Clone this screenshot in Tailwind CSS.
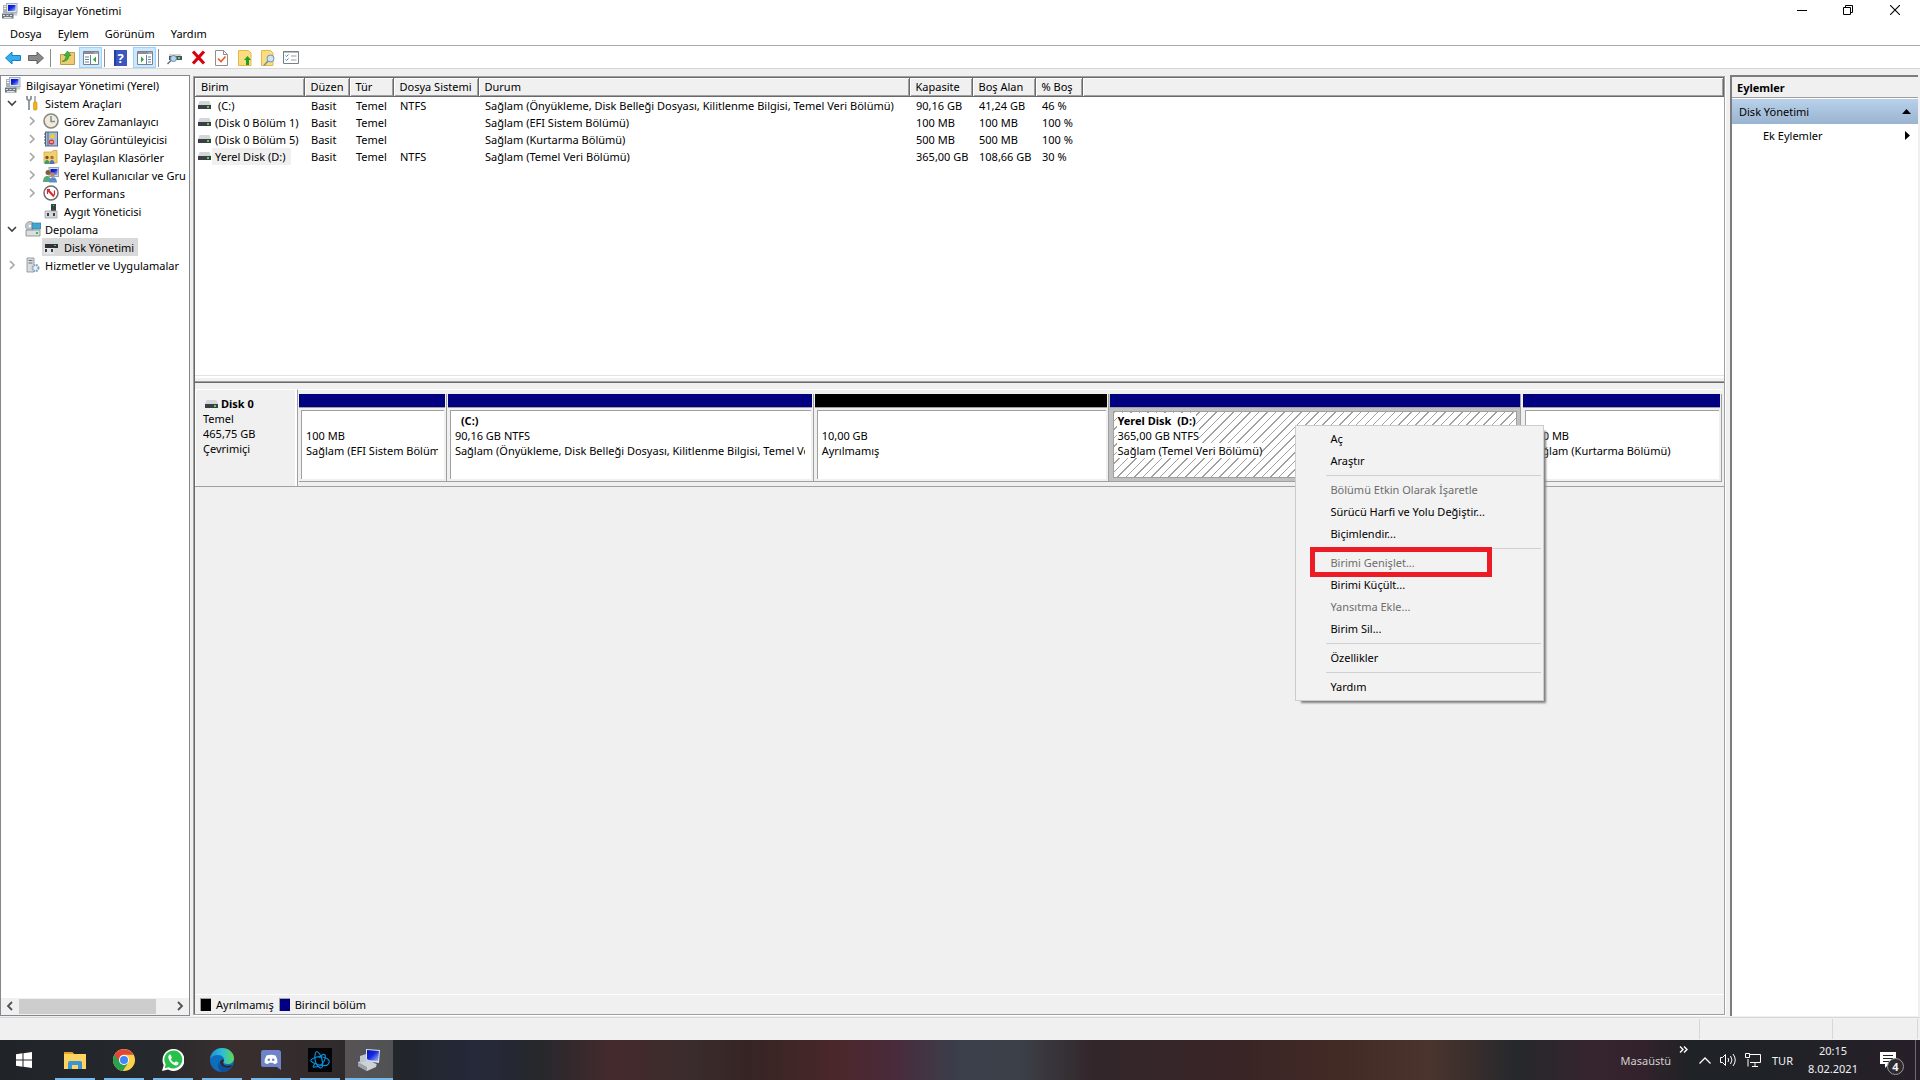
<!DOCTYPE html>
<html lang="tr">
<head>
<meta charset="utf-8">
<title>Bilgisayar Yönetimi</title>
<script src="https://cdn.jsdelivr.net/npm/@tailwindcss/browser@4"></script>
</head>
<body class="flex min-h-screen flex-col bg-[#f0f0f0] font-['Noto_Sans',sans-serif] text-[11px] leading-[17px] text-black">

<!-- Shared icons -->
<svg width="0" height="0" class="absolute" aria-hidden="true">
  <defs>
    <linearGradient id="gb" x1="0" y1="0" x2="1" y2="1"><stop offset="0" stop-color="#0412b8"/><stop offset=".45" stop-color="#1228e0"/><stop offset="1" stop-color="#a9c0ff"/></linearGradient>
    <symbol id="mmc" viewBox="0 0 16 16">
      <path d="M1 2h4l1-1v9H1z" fill="#aab1b8"/><path d="M2 3.500h2M2 5.500h2" stroke="#f4f6f8"/>
      <rect x="4.500" y=".5" width="10.500" height="9" fill="#e4e7ea" stroke="#a5adb5"/>
      <rect x="6" y="2" width="7.500" height="6" fill="url(#gb)"/>
      <path d="M9 10h6l.5 2.500H9z" fill="#c5cbd1"/>
      <rect x="0" y="10.500" width="11.500" height="5" fill="#6c7780"/><path d="M1 12.500h2M4.500 12.500h2M8 12.500h2M2 14.500h7.500" stroke="#dfe4e8"/>
    </symbol>
    <symbol id="drive" viewBox="0 0 13 8">
      <path d="M1.500 0h10L13 4H0z" fill="#d3d7dc"/><rect y="4" width="13" height="4" fill="#3b3f43"/><rect x="9" y="5" width="2" height="2" fill="#3fe04a"/>
    </symbol>
    <symbol id="down" viewBox="0 0 10 10"><path d="M1 3l4 4 4-4" fill="none" stroke="#404040" stroke-width="1.600"/></symbol>
    <symbol id="right" viewBox="0 0 10 10"><path d="M3 1l4 4-4 4" fill="none" stroke="#a6a6a6" stroke-width="1.600"/></symbol>
    <symbol id="pane" viewBox="0 0 16 14"><path d="M.5.5h15v13H.5z" fill="#fff" stroke="#7d8084"/><path d="M1 2h14" stroke="#8b8e92" stroke-width="2"/><path d="M11.500 2h1M13.500 2h1" stroke="#fff"/></symbol>
  </defs>
</svg>

<header class="bg-white">
  <div class="flex h-[24px] items-start">
    <div class="flex flex-1 items-center gap-[5px] pt-[2px] pl-[2px]">
      <svg class="size-4"><use href="#mmc"/></svg><h1>Bilgisayar Yönetimi</h1>
    </div>
    <button aria-label="Simge durumuna küçült" class="flex h-[20px] w-[46px] items-center justify-center"><svg width="10" height="10"><path d="M0 5.500h10" stroke="#000"/></svg></button>
    <button aria-label="Önceki boyut" class="flex h-[20px] w-[45px] items-center justify-center"><svg width="10" height="10" fill="none" stroke="#000"><path d="M.5 2.500h7v7h-7zM2.500 2.500v-2h7v7h-2"/></svg></button>
    <button aria-label="Kapat" class="flex h-[20px] w-[50px] items-center justify-center"><svg width="10" height="10"><path d="M0 0l10 10M10 0L0 10" stroke="#000" stroke-width="1.100"/></svg></button>
  </div>
  <nav class="flex h-[22px] items-center gap-4 border-b border-[#a9abb4] pb-[2px] pl-[10px]">
    <button>Dosya</button><button>Eylem</button><button>Görünüm</button><button>Yardım</button>
  </nav>
  <div class="flex h-[23px] items-center border-b border-[#d7d7d7] pl-[5px] pt-px">
    <button aria-label="Geri" class="mr-[7px]"><svg class="block" width="16" height="14"><path d="M.5 7L7 1v3.500h8.500v5H7V13z" fill="#35aef0" stroke="#1b7fc0"/></svg></button>
    <button aria-label="İleri" class="mr-[6px]"><svg class="block" width="16" height="14"><path d="M15.500 7L9 1v3.500H.5v5H9V13z" fill="#8a8a8a" stroke="#636363"/></svg></button>
    <span class="h-[18px] w-px bg-[#8c8c8c]"></span>
    <button aria-label="Yukarı" class="ml-[9px]"><svg class="block" width="15" height="15"><path d="M.5 4.500h7l1-2h6v12H.5z" fill="#eccb72" stroke="#c19a3c"/><path d="M2 11.500c3-1 4-3.500 4-6H4l3.500-4.500L11 5.500H9c0 4-3 6-7 6z" fill="#45b33c" stroke="#2a8a2a" stroke-width=".6"/></svg></button>
    <button aria-label="Konsol ağacını göster" class="ml-1 flex h-[21px] w-[23px] items-center justify-center border border-[#99d1ff] bg-[#cce8ff]"><svg width="16" height="14"><use href="#pane"/><path d="M7.500 4v9M2 6h4M2 8.500h4M2 11h4" stroke="#66809a"/><path d="M13 5.500v6L10 8.500z" fill="#33a533"/></svg></button>
    <span class="ml-[2px] h-[18px] w-px bg-[#8c8c8c]"></span>
    <button aria-label="Yardım konuları" class="ml-[9px] h-4 w-[13px] bg-[#3c57bf] text-center text-[13px] leading-4 font-bold text-white shadow-[inset_2px_0_0_#24409a]">?</button>
    <button aria-label="Eylem bölmesini göster" class="ml-[6px] flex h-[21px] w-[23px] items-center justify-center border border-[#99d1ff] bg-[#cce8ff]"><svg width="16" height="14"><use href="#pane"/><path d="M9.500 4v9M11 6h3M11 8.500h3M11 11h3" stroke="#66809a"/><path d="M4 5.500v6l3-3z" fill="#33a533"/></svg></button>
    <span class="ml-[2px] h-[18px] w-px bg-[#8c8c8c]"></span>
    <button aria-label="Yenile" class="ml-2"><svg class="block" width="16" height="14"><path d="M2 3h12v2H2z" fill="#cfd4d8"/><path d="M2 5h13v4H2z" fill="#4c5257"/><path d="M11 6h2v2h-2z" fill="#3fe04a"/><circle cx="6.500" cy="7.500" r="3" fill="#b9d3e8" stroke="#6b8ba6"/><path d="M4 9.500L.5 13" stroke="#5b7183" stroke-width="1.500"/></svg></button>
    <button aria-label="Sil" class="ml-2"><svg class="block" width="15" height="15"><path d="M2 1.500l11 12M13 1.500l-11 12" stroke="#d8000c" stroke-width="3.200"/></svg></button>
    <button aria-label="Özellikler" class="ml-[9px]"><svg class="block" width="13" height="16"><path d="M.5.500h8l4 4v11H.5z" fill="#fff" stroke="#8f8f8f"/><path d="M8.500.500v4h4" fill="none" stroke="#8f8f8f"/><path d="M3 8.500l3 3 4.500-5" fill="none" stroke="#ec5b2c" stroke-width="1.700"/></svg></button>
    <button aria-label="Aç" class="ml-[10px]"><svg class="block" width="14" height="16"><path d="M.5.500h10l2.500 2.500v12.500H.5z" fill="#fbdc80" stroke="#e5b84c"/><path d="M9.500 6L13 10h-2v5H8v-5H6z" fill="#1f9e2c"/></svg></button>
    <button aria-label="Ara" class="ml-[9px]"><svg class="block" width="15" height="16"><path d="M.5.500h9l2.500 2.500v12.500H.5z" fill="#fbdc80" stroke="#e5b84c"/><circle cx="9.500" cy="8.500" r="3.500" fill="#cfe5f5" stroke="#6e92b0"/><path d="M7 11l-4 4.500" stroke="#6e92b0" stroke-width="1.500"/></svg></button>
    <button aria-label="Liste" class="ml-[7px]"><svg class="block" width="16" height="13"><path d="M.5.500h15v12H.5z" fill="#fff" stroke="#7c8084"/><path d="M0 1h16" stroke="#7c8084"/><path d="M2.500 4.500l1 1 2-2M2.500 8.500l1 1 2-2" fill="none" stroke="#2e86d6"/><path d="M8 5h5.500M8 9h5.500" stroke="#9a9da0"/></svg></button>
  </div>
</header>

<div class="flex flex-1 pt-[6px]">
  <!-- Console tree -->
  <aside class="mb-px flex w-[190px] shrink-0 flex-col overflow-hidden border border-[#828790] bg-white">
    <ul class="flex-1 whitespace-nowrap">
      <li class="flex h-[18px] items-center gap-[5px] pl-1"><svg class="size-4 shrink-0"><use href="#mmc"/></svg>Bilgisayar Yönetimi (Yerel)</li>
      <li class="flex h-[18px] items-center pl-[6px]"><svg class="mr-2 size-[10px] shrink-0"><use href="#down"/></svg><svg class="mr-1 size-4 shrink-0" viewBox="0 0 16 16"><path d="M2 1v3l2 2 2-2V1M4 6v9" fill="none" stroke="#8a9096" stroke-width="1.800"/><path d="M10 1v6" stroke="#9aa0a6" stroke-width="1.500"/><rect x="8.500" y="7" width="3.500" height="8" rx="1" fill="#f2b318" stroke="#c98a06" stroke-width=".6"/></svg>Sistem Araçları</li>
      <li class="flex h-[18px] items-center pl-[26px]"><svg class="mr-[6px] size-[10px] shrink-0"><use href="#right"/></svg><svg class="mr-[5px] size-4 shrink-0" viewBox="0 0 16 16"><circle cx="8" cy="8" r="7" fill="#f4ead2" stroke="#84888c" stroke-width="1.600"/><path d="M8 3v5.500h4" fill="none" stroke="#6f8fb4" stroke-width="1.500"/></svg>Görev Zamanlayıcı</li>
      <li class="flex h-[18px] items-center pl-[26px]"><svg class="mr-[6px] size-[10px] shrink-0"><use href="#right"/></svg><svg class="mr-[5px] size-4 shrink-0" viewBox="0 0 16 16"><rect x="2.500" y="1" width="12" height="14" fill="#a9bdd8" stroke="#4e6585"/><path d="M5 1v14" stroke="#4e6585"/><path d="M9.500 2l3 5h-6z" fill="#f7cf1b"/><circle cx="8.500" cy="11" r="2.600" fill="#d8343a"/><path d="M7 11h3" stroke="#fff"/><path d="M1 3h2M1 6h2M1 9h2M1 12h2" stroke="#555"/></svg>Olay Görüntüleyicisi</li>
      <li class="flex h-[18px] items-center pl-[26px]"><svg class="mr-[6px] size-[10px] shrink-0"><use href="#right"/></svg><svg class="mr-[5px] size-4 shrink-0" viewBox="0 0 16 16"><path d="M1 3h8l1-1.500h4V14H1z" fill="#f2cf6e" stroke="#d2a63c" stroke-width=".8"/><circle cx="4" cy="8.500" r="1.700" fill="#7a5130"/><circle cx="9" cy="8.500" r="1.700" fill="#9b7047"/><path d="M1.500 15c0-5.500 5-5.500 5 0z" fill="#3f9a6c"/><path d="M6.500 15c0-5.500 5-5.500 5 0z" fill="#4a79b8"/></svg>Paylaşılan Klasörler</li>
      <li class="flex h-[18px] items-center pl-[26px]"><svg class="mr-[6px] size-[10px] shrink-0"><use href="#right"/></svg><svg class="mr-[5px] size-4 shrink-0" viewBox="0 0 16 16"><rect x="6" y=".5" width="9.500" height="9" fill="#d9dde2" stroke="#9aa3ad"/><rect x="7.500" y="2" width="7" height="6" fill="url(#gb)"/><circle cx="5" cy="5.500" r="2.500" fill="#80603a"/><circle cx="9.500" cy="7.500" r="2.300" fill="#b98a55"/><path d="M0 15c0-8 8-8 8 0z" fill="#5aa77c"/><path d="M6 15.500c0-7 8-7 8 0z" fill="#5b8cc4"/></svg>Yerel Kullanıcılar ve Gru</li>
      <li class="flex h-[18px] items-center pl-[26px]"><svg class="mr-[6px] size-[10px] shrink-0"><use href="#right"/></svg><svg class="mr-[5px] size-4 shrink-0" viewBox="0 0 16 16"><circle cx="8" cy="8" r="7" fill="#fff" stroke="#6e6e6e" stroke-width="1.500"/><path d="M4.500 4.500l6.500 7" stroke="#d8242a" stroke-width="2"/><path d="M4.500 9V4.500H7M11.500 10V5.500" fill="none" stroke="#d8242a" stroke-width="1.200"/></svg>Performans</li>
      <li class="flex h-[18px] items-center pl-[42px]"><svg class="mr-[5px] size-4 shrink-0" viewBox="0 0 16 16"><path d="M8 1h5v8H8z" fill="#3c4044"/><path d="M10 2h1v1h-1z" fill="#3fe04a"/><path d="M2 8h12v7H2z" fill="#d4d7da" stroke="#9ea2a6" stroke-width=".8"/><path d="M4 10h2v3H4zM10 10h2v3h-2z" fill="#3c4044"/></svg>Aygıt Yöneticisi</li>
      <li class="flex h-[18px] items-center pl-[6px]"><svg class="mr-2 size-[10px] shrink-0"><use href="#down"/></svg><svg class="mr-1 size-4 shrink-0" viewBox="0 0 16 16"><circle cx="5" cy="5" r="4.500" fill="#c3c8cc" stroke="#8a9096" stroke-width=".7"/><circle cx="5" cy="5" r="1.300" fill="#fff"/><rect x="7" y="2" width="9" height="6" fill="#43a6cf" stroke="#2a7ea6" stroke-width=".7"/><path d="M1 9h14v6H1z" fill="#dcdfe2" stroke="#7d8388" stroke-width=".8"/><path d="M11 11h2v2h-2z" fill="#2fbf3a"/></svg>Depolama</li>
      <li class="flex h-[18px] items-center pl-[41px]"><button class="flex h-[18px] items-center bg-[#d9d9d9] pr-1 pl-px"><svg class="mr-[5px] size-4 shrink-0" viewBox="0 0 16 16"><path d="M3 2h11l1 3H2z" fill="#d3d7dc"/><path d="M2 5h13v4H2z" fill="#303438"/><path d="M11 6h2v1h-2z" fill="#3fe04a"/><path d="M1 9h10v6H1z" fill="#e4e6e8"/><path d="M2 10h2v3H2zM8 10h2v3H8z" fill="#3c4044"/></svg>Disk Yönetimi</button></li>
      <li class="flex h-[18px] items-center pl-[6px]"><svg class="mr-2 size-[10px] shrink-0"><use href="#right"/></svg><svg class="mr-1 size-4 shrink-0" viewBox="0 0 16 16"><path d="M2 1h7v14H2z" fill="#dadde0" stroke="#858b90" stroke-width=".8"/><path d="M3.500 3.500h4M3.500 6h4" stroke="#6a7075"/><circle cx="10.500" cy="11" r="3" fill="#e8f1f8" stroke="#7da3c2" stroke-width="2" stroke-dasharray="1.600 .8"/></svg>Hizmetler ve Uygulamalar</li>
    </ul>
    <div class="flex h-[17px] items-center bg-[#f0f0f0] pb-px">
      <button aria-label="Sola kaydır" class="flex w-[18px] justify-center"><svg width="10" height="10"><path d="M7 1L3 5l4 4" fill="none" stroke="#505050" stroke-width="1.800"/></svg></button>
      <span class="h-[15px] w-[137px] bg-[#cdcdcd]"></span>
      <button aria-label="Sağa kaydır" class="ml-auto flex w-[18px] justify-center"><svg width="10" height="10"><path d="M3 1l4 4-4 4" fill="none" stroke="#505050" stroke-width="1.800"/></svg></button>
    </div>
  </aside>

  <!-- Volumes and disks -->
  <main class="mt-px mb-[2px] ml-[3px] flex min-w-0 flex-1 flex-col border border-[#a0a0a0] shadow-[1px_1px_0_#fff]">
    <div class="flex flex-1 flex-col border-t border-l border-[#696969]">
      <section class="h-[297px] overflow-hidden bg-white">
        <table class="w-full table-fixed border-collapse text-left whitespace-nowrap">
          <colgroup><col class="w-[109px]"><col class="w-[45px]"><col class="w-[44px]"><col class="w-[85px]"><col class="w-[431px]"><col class="w-[63px]"><col class="w-[63px]"><col class="w-[47px]"><col></colgroup>
          <thead class="bg-[#f0f0f0]">
            <tr class="h-[18px] border-b border-[#696969] *:border-r *:border-[#696969] *:p-0 *:pl-[6px] *:font-normal *:shadow-[inset_1px_1px_0_#fff,inset_-1px_-1px_0_#a0a0a0]">
              <th>Birim</th><th>Düzen</th><th>Tür</th><th>Dosya Sistemi</th><th>Durum</th><th>Kapasite</th><th>Boş Alan</th><th>% Boş</th><th></th>
            </tr>
          </thead>
          <tbody>
            <tr class="*:p-0 *:pl-[7px]"><td><span class="-ml-1 flex items-center"><svg class="mr-[3px] h-[8px] w-[13px]"><use href="#drive"/></svg><span class="pl-1">(C:)</span></span></td><td>Basit</td><td>Temel</td><td>NTFS</td><td>Sağlam (Önyükleme, Disk Belleği Dosyası, Kilitlenme Bilgisi, Temel Veri Bölümü)</td><td>90,16 GB</td><td>41,24 GB</td><td>46 %</td><td></td></tr>
            <tr class="*:p-0 *:pl-[7px]"><td><span class="-ml-1 flex items-center"><svg class="mr-[3px] h-[8px] w-[13px]"><use href="#drive"/></svg><span class="pl-px">(Disk 0 Bölüm 1)</span></span></td><td>Basit</td><td>Temel</td><td></td><td>Sağlam (EFI Sistem Bölümü)</td><td>100 MB</td><td>100 MB</td><td>100 %</td><td></td></tr>
            <tr class="*:p-0 *:pl-[7px]"><td><span class="-ml-1 flex items-center"><svg class="mr-[3px] h-[8px] w-[13px]"><use href="#drive"/></svg><span class="pl-px">(Disk 0 Bölüm 5)</span></span></td><td>Basit</td><td>Temel</td><td></td><td>Sağlam (Kurtarma Bölümü)</td><td>500 MB</td><td>500 MB</td><td>100 %</td><td></td></tr>
            <tr class="*:p-0 *:pl-[7px]"><td><span class="-ml-1 flex items-center"><svg class="mr-px h-[8px] w-[13px]"><use href="#drive"/></svg><span class="bg-[#f0f0f0] pr-[5px] pl-[3px]">Yerel Disk (D:)</span></span></td><td>Basit</td><td>Temel</td><td>NTFS</td><td>Sağlam (Temel Veri Bölümü)</td><td>365,00 GB</td><td>108,66 GB</td><td>30 %</td><td></td></tr>
          </tbody>
        </table>
      </section>
      <div class="h-[8px] border-t border-b border-t-[#e3e3e3] border-b-[#696969] shadow-[inset_0_2px_0_#fff,inset_0_-1px_0_#a0a0a0]"></div>

      <section class="flex flex-1 flex-col">
        <div class="mt-[6px] flex border-b border-[#a0a0a0]">
          <div class="h-[97px] w-[103px] shrink-0 border-t border-r border-t-white border-r-[#a0a0a0] pt-[6px] pl-[8px] leading-[15px] shadow-[inset_-2px_0_0_#fff,inset_1px_0_0_#fff]">
            <p class="flex items-center gap-[3px] pl-[2px] font-bold"><svg class="h-[8px] w-[13px]"><use href="#drive"/></svg>Disk 0</p>
            <p>Temel</p><p>465,75 GB</p><p>Çevrimiçi</p>
          </div>
          <div class="mr-[2px] grid min-w-0 flex-1 grid-cols-[148fr_367fr_296fr_412fr_201fr] border-t border-white pt-1 pl-px leading-[15px] whitespace-nowrap">
            <article class="flex h-[88px] min-w-0 flex-col border-r border-b border-[#a0a0a0]">
              <div class="mr-px h-[14px] border-b border-[#a0a0a0] bg-[#000080]"></div>
              <div class="m-[2px] flex-1 overflow-hidden border-t border-l border-[#a0a0a0] bg-white pt-[17px] pr-[6px] pl-[4px]"><p>100 MB</p><p class="overflow-hidden">Sağlam (EFI Sistem Bölümü)</p></div>
            </article>
            <article class="flex h-[88px] min-w-0 flex-col border-r border-b border-[#a0a0a0] pl-px">
              <div class="mr-px h-[14px] border-b border-[#a0a0a0] bg-[#000080]"></div>
              <div class="m-[2px] flex-1 overflow-hidden border-t border-l border-[#a0a0a0] bg-white pt-[2px] pr-[6px] pl-[4px]"><p class="pl-[6px] font-bold">(C:)</p><p>90,16 GB NTFS</p><p class="overflow-hidden">Sağlam (Önyükleme, Disk Belleği Dosyası, Kilitlenme Bilgisi, Temel Veri Bölümü)</p></div>
            </article>
            <article class="flex h-[88px] min-w-0 flex-col border-r border-b border-[#a0a0a0] pl-px">
              <div class="mr-px h-[14px] border-b border-[#a0a0a0] bg-black"></div>
              <div class="m-[2px] flex-1 border-t border-l border-[#a0a0a0] bg-white pt-[17px] pl-[4px]"><p>10,00 GB</p><p>Ayrılmamış</p></div>
            </article>
            <article class="relative flex h-[88px] min-w-0 flex-col border-r border-b border-[#a0a0a0] bg-[#c0c0c0] pl-px">
              <div class="h-[14px] border-b border-[#a0a0a0] bg-[#000080]"></div>
              <div class="m-[3px] flex-1 border border-[#a0a0a0] bg-white bg-[repeating-linear-gradient(135deg,#a0a0a0_0_1px,#fff_1px_6px)] pt-px pl-[3px] *:w-fit *:bg-white"><p class="font-bold">Yerel Disk&nbsp; (D:)</p><p>365,00 GB NTFS</p><p>Sağlam (Temel Veri Bölümü)</p></div>

              <!-- Context menu -->
              <ul role="menu" class="absolute top-[31px] left-[186px] z-10 w-[249px] border border-[#cccccc] bg-[#f2f2f2] py-[2px] shadow-[4px_4px_2px_-2px_#808080] [&_button]:block [&_button]:h-[22px] [&_button]:w-full [&_button]:pb-[2px] [&_button]:pl-[34px] [&_button]:text-left [&_button:disabled]:text-[#6d6d6d] [&_hr]:mt-[3px] [&_hr]:mr-[2px] [&_hr]:mb-[3px] [&_hr]:ml-[30px] [&_hr]:border-[#d0d0d0]">
                <li><button>Aç</button></li>
                <li><button>Araştır</button></li>
                <li><hr></li>
                <li><button disabled>Bölümü Etkin Olarak İşaretle</button></li>
                <li><button>Sürücü Harfi ve Yolu Değiştir...</button></li>
                <li><button>Biçimlendir...</button></li>
                <li><hr></li>
                <li class="relative"><button disabled>Birimi Genişlet...</button><span class="absolute -top-[5px] left-[14px] h-[30px] w-[182px] border-5 border-[#ed1c24]"></span></li>
                <li><button>Birimi Küçült...</button></li>
                <li><button disabled>Yansıtma Ekle...</button></li>
                <li><button>Birim Sil...</button></li>
                <li><hr></li>
                <li><button>Özellikler</button></li>
                <li><hr></li>
                <li><button>Yardım</button></li>
              </ul>
            </article>
            <article class="flex h-[88px] min-w-0 flex-col border-r border-b border-[#a0a0a0] pl-[2px]">
              <div class="mr-px h-[14px] border-b border-[#a0a0a0] bg-[#000080]"></div>
              <div class="m-[2px] flex-1 border-t border-l border-[#a0a0a0] bg-white pt-[17px] pl-[4px]"><p>500 MB</p><p>Sağlam (Kurtarma Bölümü)</p></div>
            </article>
          </div>
        </div>
        <div class="mt-auto flex h-[20px] items-center border-t border-white pl-[5px]">
          <span class="mr-[5px] h-[13px] w-[11px] border-t border-l border-[#a0a0a0] bg-black"></span>Ayrılmamış
          <span class="mr-[5px] ml-[5px] h-[13px] w-[11px] border-t border-l border-[#a0a0a0] bg-[#000080]"></span>Birincil bölüm
        </div>
      </section>
    </div>
  </main>

  <!-- Actions -->
  <aside class="mr-[2px] mb-px ml-[5px] w-[188px] shrink-0 border-t-2 border-l-2 border-[#7c7c7c] bg-white">
    <h2 class="h-[21px] border-b border-[#a0a0a0] bg-[#f0f0f0] pt-[2px] pl-[5px] font-bold">Eylemler</h2>
    <button class="mt-px flex h-[25px] w-full items-center justify-between bg-linear-to-b from-[#b9d1ea] to-[#99b4d1] pr-[7px] pl-[7px]">Disk Yönetimi<svg width="9" height="5"><path d="M0 5l4.500-5L9 5z"/></svg></button>
    <button class="flex h-[23px] w-full items-center justify-between pr-[8px] pl-[31px]">Ek Eylemler<svg width="5" height="9"><path d="M0 0l5 4.500L0 9z"/></svg></button>
  </aside>
</div>

<footer class="flex h-[23px] justify-end border-t border-[#d7d7d7] py-px pr-[2px]">
  <span class="w-[133px] border-l border-[#d7d7d7]"></span><span class="w-[86px] border-x border-[#d7d7d7]"></span>
</footer>

<!-- Taskbar -->
<nav class="flex h-[40px] items-stretch bg-[linear-gradient(90deg,#202327_0%,#25282c_8%,#3a2f2f_12%,#312b2c_17%,#22262a_21%,#25293a_25%,#26282c_28%,#452a2d_32%,#3a2c2c_36%,#362424_39%,#4a272a_43.500%,#4a2b3b_46.500%,#3a3f4b_50%,#3c4148_53%,#32262a_57%,#3a2526_65%,#432b25_70%,#4a342d_74.500%,#26282c_79%,#36242f_83%,#33222c_85.500%,#1f2226_88%,#1f2226_92%,#271f29_100%)] text-[#f2f2f2]">
  <button aria-label="Başlat" class="flex w-[48px] items-center justify-center"><svg width="16" height="16" fill="#fff"><path d="M0 2.200L6.500 1.300v6.200H0zM7.500 1.200L16 0v7.500H7.500zM0 8.500h6.500v6.200L0 13.800zM7.500 8.500H16V16l-8.500-1.200z"/></svg></button>
  <div class="flex gap-[9px] pl-[7px]">
    <button aria-label="Dosya Gezgini" class="flex w-[40px] items-center justify-center border-b-2 border-[#76b9ed] pt-[2px]"><svg width="22" height="19"><path d="M0 1h8l2 2h12v15H0z" fill="#fcd462"/><path d="M0 1h8l2 2H0z" fill="#e8a31c"/><path d="M4 18v-6q0-2 2-2h10q2 0 2 2v6h-4v-4H8v4z" fill="#3a94d8"/></svg></button>
    <button aria-label="Chrome" class="flex w-[40px] items-center justify-center border-b-2 border-[#76b9ed] pt-[2px]"><svg width="22" height="22" viewBox="0 0 22 22"><circle cx="11" cy="11" r="11" fill="#fdd04a"/><path d="M11 11L1.500 5.500A11 11 0 0 0 9.800 22l5.500-8.500z" fill="#2aa14f"/><path d="M1.500 5.500A11 11 0 0 1 20.500 5.800H11a5 5 0 0 0-4.500 7.500z" fill="#e2463b"/><circle cx="11" cy="11" r="5" fill="#fff"/><circle cx="11" cy="11" r="4" fill="#4286f5"/></svg></button>
    <button aria-label="WhatsApp" class="flex w-[40px] items-center justify-center border-b-2 border-[#76b9ed] pt-[2px]"><svg width="22" height="22" viewBox="0 0 22 22"><path d="M0 22l1.700-6A11 11 0 1 1 6 20.500z" fill="#fff"/><path d="M2.700 19.300l1-4A9 9 0 1 1 6.700 18.200z" fill="#27c04b"/><path d="M7.500 5.500c-3 2 0 9 6 11 2 .4 3.500-1.500 3-3l-2.600-1.300-1.400 1.500c-2-.7-3-2-3.700-3.500l1.100-1.400-1.100-3z" fill="#fff"/></svg></button>
    <button aria-label="Edge" class="flex w-[40px] items-center justify-center border-b-2 border-[#76b9ed] pt-[2px]"><svg width="24" height="24" viewBox="0 0 24 24"><defs><linearGradient id="eg" x1="0" x2="1"><stop offset="0" stop-color="#1f8fe0"/><stop offset=".55" stop-color="#2fc0cf"/><stop offset="1" stop-color="#62d84e"/></linearGradient></defs><circle cx="12" cy="12" r="12" fill="#0f6dbd"/><path d="M0 11C1 4 6 0 12 0c7 0 12 5 12 10 0 4-3 6-6 6-4 0-5-1-4-3 1-3-2-6-6-6-4 0-7 2-8 4z" fill="url(#eg)"/><path d="M9 13c0 5 5 8 12 6l1 0c-3 3-6 5-10 5 0 0-6-3-3-11z" fill="#0c4fa0"/><path d="M14 12c-3 5 2 7 8.500 5L21 19c-6 2-11-1-11-5 1-3 3-3 4-2z" fill="#30262a"/></svg></button>
    <button aria-label="Discord" class="flex w-[40px] items-center justify-center border-b-2 border-[#76b9ed] pt-[2px]"><svg width="20" height="20" viewBox="0 0 20 20"><path d="M2.500 0h15Q20 0 20 2.500V20l-4-3H2.500Q0 17 0 14.500v-12Q0 0 2.500 0z" fill="#6f84c8"/><path d="M5.500 5.500q4.500-1.500 9 0 2 3 2 7-1.500 1.500-3.500 1.500l-1-1.300H8L7 14q-2 0-3.500-1.500 0-4 2-7z" fill="#fff"/><circle cx="7.800" cy="9.800" r="1.300" fill="#6f84c8"/><circle cx="12.200" cy="9.800" r="1.300" fill="#6f84c8"/></svg></button>
    <button aria-label="Battle.net" class="flex w-[40px] items-center justify-center border-b-2 border-[#76b9ed] pt-[2px]"><svg width="24" height="24" viewBox="0 0 24 24" fill="none" stroke="#0b8fd6" stroke-width="1.200"><rect width="24" height="24" rx="1" fill="#020408" stroke="none"/><path d="M8.500 3.500c2 0 4.500 4 5.500 8s1 8-1 8.500c-2.500 0-5.500-4-6-8.500-.4-4 .5-8 1.500-8z"/><path d="M2.500 12.500c2-3 8-4.500 12-3.500 3.500.6 6.500 2.500 7 4.500"/><path d="M5 19c4 .5 8-1.500 10.500-5 2-3 2.500-6.500 1-7.500-1.500-.5-3.500 1-5 3.500"/><path d="M2.500 12.500c1.500 2 5 3.500 9 4.500 4 .8 7.500.5 8.500-.5l1.500-3M5 19l1.500-3"/></svg></button>
  </div>
  <button aria-label="Bilgisayar Yönetimi" class="ml-[5px] flex w-[48px] items-center justify-center border-b-2 border-[#76b9ed] bg-white/20 pt-[2px]"><svg width="24" height="24" viewBox="0 0 24 24"><path d="M9 1l14 1-1 13-13-2z" fill="#dce1e6"/><path d="M10 2l12 1-1 10-11-1z" fill="url(#gb)"/><path d="M12 14l8 2-1 3-8-2z" fill="#a8b0b7"/><path d="M1 14l9-3 9 5v3l-9 4-9-5z" fill="#cdd2d6"/><path d="M1 14l9 5v4l-9-5z" fill="#9aa2a9"/><path d="M3 8l6-2v7l-6 2z" fill="#bfc6cc"/></svg></button>

  <div class="ml-auto flex items-center text-[12px]">
    <span class="mr-2 text-[11px] text-[#d0d0d0]">Masaüstü</span>
    <button aria-label="Diğer" class="mr-[11px] self-start pt-[6px]"><svg width="9" height="7"><path d="M1 .5l3 3-3 3M5 .5l3 3-3 3" fill="none" stroke="#fff" stroke-width="1.400"/></svg></button>
    <button aria-label="Gizli simgeler" class="mr-[9px]"><svg class="block" width="12" height="7"><path d="M.5 6.500L6 1l5.500 5.500" fill="none" stroke="#fff" stroke-width="1.300"/></svg></button>
    <button aria-label="Ses" class="mr-[8px]"><svg class="block" width="17" height="14" fill="none" stroke="#fff"><path d="M.5 4.500h2l3-3v11l-3-3h-2zM8 5q1.500 2 0 4M10.500 3q3 4 0 8M13 1q4.500 6 0 12"/></svg></button>
    <button aria-label="Ağ" class="mr-[11px]"><svg class="block" width="16" height="14" fill="none" stroke="#fff"><path d="M5 1.500h10.500v8H5M3 6v7.500M.5.500h4v4h-4zM10 10v3M7 13.500h6"/></svg></button>
    <button class="mr-[15px] text-[11px]">TUR</button>
    <button class="mr-[21px] w-[50px] text-center text-[11px] leading-[18px]">20:15<br>8.02.2021</button>
    <button aria-label="Bildirimler" class="relative mr-[18px]"><svg class="block" width="18" height="18"><path d="M1 1h16v12h-7l-4 4v-4H1z" fill="#fff"/><path d="M4 4.500h10M4 7.500h10M4 10.500h6" stroke="#222"/></svg><span class="absolute top-[7px] left-[8px] flex size-[17px] items-center justify-center rounded-full border border-[#9a9a9a] bg-[#2b2b30] text-[11px] font-bold">4</span></button>
    <span class="mr-[4px] h-[40px] w-px bg-[#6b6b70]"></span>
  </div>
</nav>
</body>
</html>
